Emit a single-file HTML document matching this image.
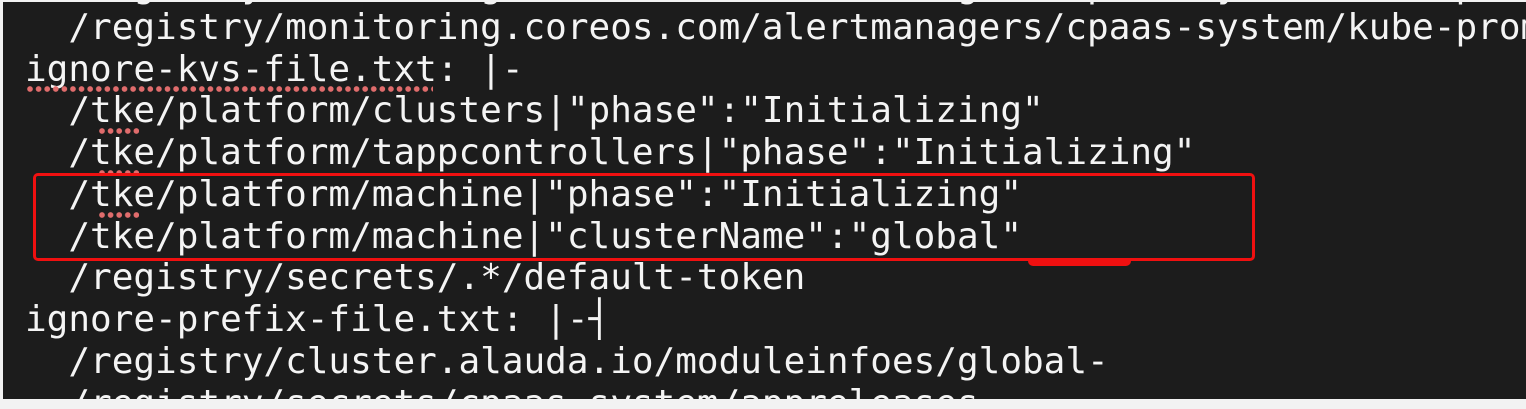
<!DOCTYPE html>
<html><head><style>
html,body{margin:0;padding:0;background:#f2f2f2;}
#t{position:absolute;left:3px;top:2px;width:1523px;height:397px;background:#1c1c1c;overflow:hidden;}
pre{position:absolute;left:22px;top:-37px;margin:0;font-family:"DejaVu Sans Mono","Liberation Mono",monospace;font-size:36px;line-height:41.75px;color:#f4f4f4;}
.d{position:absolute;height:6px;background:radial-gradient(circle at 3px 3px,#e06c6c 2.6px,transparent 3px) 0 0/8.6px 6px repeat-x;}
</style></head><body>
<div id="t">
<pre>  /registry/monitoring.coreos.com/alertmanagers/cpaas-system/kube-pro
  /registry/monitoring.coreos.com/alertmanagers/cpaas-system/kube-prom
ignore-kvs-file.txt: |-
  /tke/platform/clusters|"phase":"Initializing"
  /tke/platform/tappcontrollers|"phase":"Initializing"
  /tke/platform/machine|"phase":"Initializing"
  /tke/platform/machine|"clusterName":"global"
  /registry/secrets/.*/default-token
ignore-prefix-file.txt: |-┤
  /registry/cluster.alauda.io/moduleinfoes/global-
  /registry/secrets/cpaas-system/appreleases</pre>
<div class="d" style="left:24px;top:84px;width:406px"></div>
<div class="d" style="left:96px;top:126px;width:40px"></div>
<div class="d" style="left:96px;top:168px;width:40px"></div>
<div class="d" style="left:96px;top:210px;width:40px"></div>
<div style="position:absolute;left:30px;top:171px;width:1216px;height:82px;border:3px solid #f01010;border-radius:5px"></div>
<div style="position:absolute;left:1025px;top:256px;width:103px;height:8px;background:#f01010;border-radius:0 0 5px 5px"></div>
</div>
</body></html>
